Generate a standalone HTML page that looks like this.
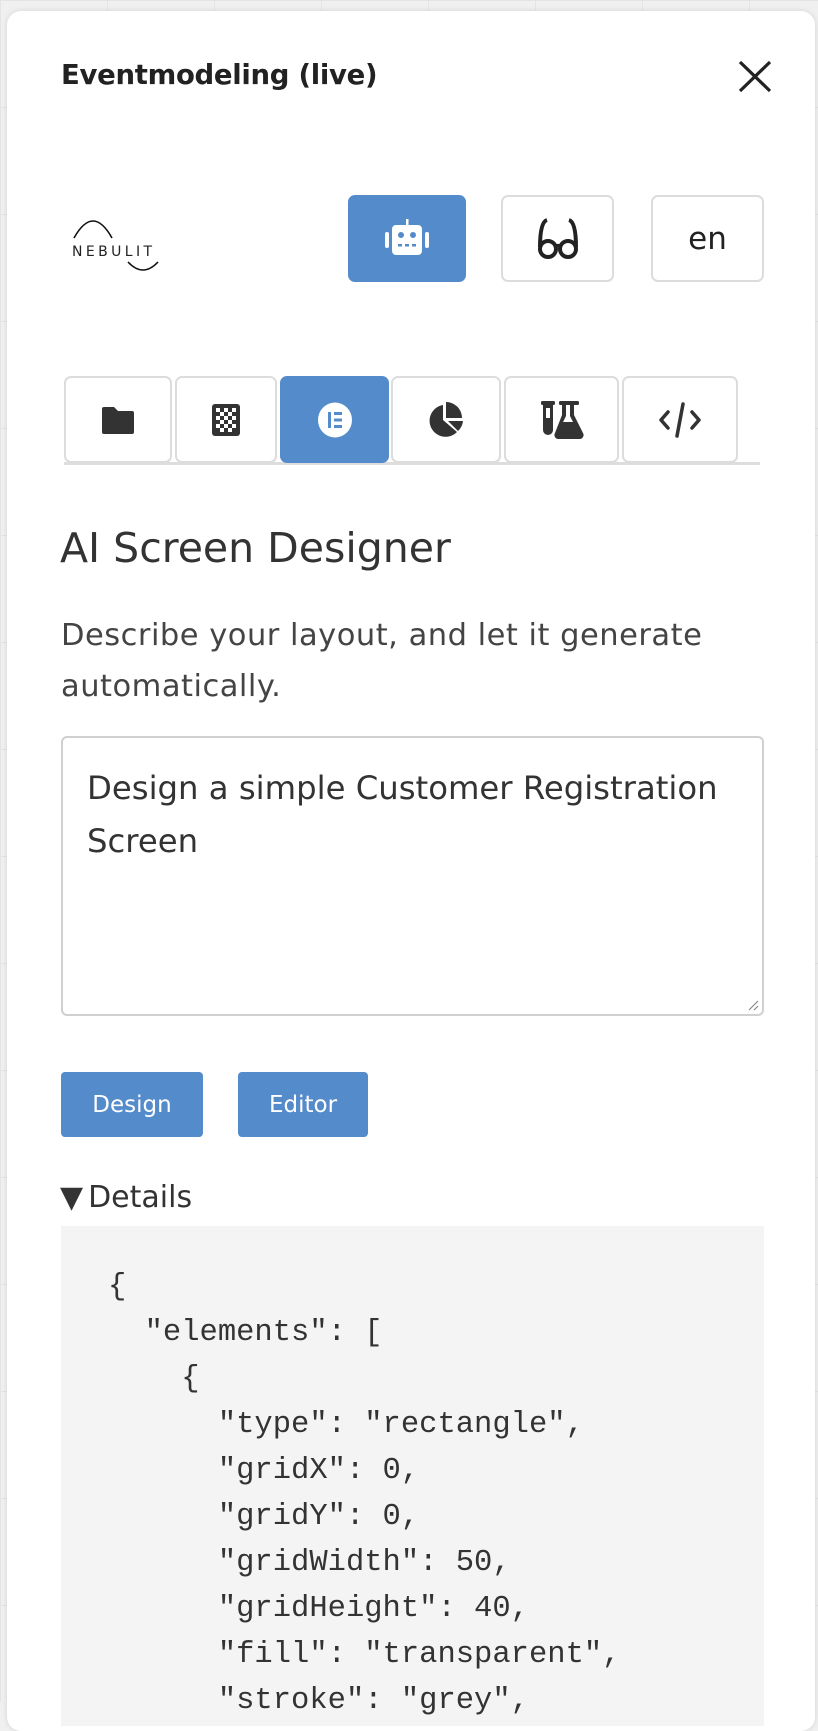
<!DOCTYPE html>
<html><head><meta charset="utf-8"><style>
*{box-sizing:border-box;margin:0;padding:0}
html,body{width:818px;height:1702px;overflow:hidden;background:#f0f0f0;font-family:"DejaVu Sans",sans-serif;color:#333}
.grid{position:absolute;inset:0;background-image:linear-gradient(#e4e4e4 1px,transparent 1px),linear-gradient(90deg,#e4e4e4 1px,transparent 1px);background-size:107px 107px}
.panel{position:absolute;left:7px;top:11px;width:808px;height:1720px;background:#fff;border-radius:14px;box-shadow:0 0 6px rgba(0,0,0,.12)}
.a{position:absolute;white-space:nowrap}
.btn{position:absolute;border:2px solid #dcdcdc;border-radius:7px;background:#fff;display:flex;align-items:center;justify-content:center}
.blue{background:#548bcb;border-color:#548bcb}
pre{font-family:"Liberation Mono",monospace;font-size:30.5px;line-height:46px;color:#333;white-space:pre !important}
</style></head><body>
<div class="grid"></div>
<div class="panel"></div>
<div class="a" style="left:61px;top:59px;font-size:27.5px;font-weight:bold;color:#222;letter-spacing:-0.3px">Eventmodeling (live)</div>
<svg class="a" style="left:738px;top:60px" width="34" height="33" viewBox="0 0 34 33"><path d="M2 2L32 31M32 2L2 31" stroke="#222" stroke-width="3.2"/></svg>
<svg class="a" style="left:70px;top:218px" width="94" height="60" viewBox="0 0 94 60">
<path d="M4 20 Q23 -14 42 20" fill="none" stroke="#111" stroke-width="1.6"/>
<text x="2" y="38" font-family="DejaVu Sans" font-size="14" letter-spacing="3.4" fill="#222">NEBULIT</text>
<path d="M58 44 Q73 60 88 44" fill="none" stroke="#111" stroke-width="1.6"/>
</svg>
<div class="btn blue" style="left:348px;top:195px;width:118px;height:87px">
<svg width="46" height="40" viewBox="0 0 46 40"><rect x="22" y="0" width="2.5" height="7" fill="#fff"/><rect x="8" y="6" width="30" height="30" rx="4" fill="#fff"/><rect x="1" y="13" width="4" height="16" rx="2" fill="#fff"/><rect x="41" y="13" width="4" height="16" rx="2" fill="#fff"/><circle cx="17" cy="16" r="3" fill="#548bcb"/><circle cx="29" cy="16" r="3" fill="#548bcb"/><rect x="14" y="25" width="4" height="2.5" fill="#548bcb"/><rect x="21" y="25" width="4" height="2.5" fill="#548bcb"/><rect x="28" y="25" width="4" height="2.5" fill="#548bcb"/></svg></div>
<div class="btn" style="left:501px;top:195px;width:113px;height:87px">
<svg width="42" height="44" viewBox="0 0 42 44"><path d="M10 3 Q3 5 3 30 M32 3 Q39 5 39 30" fill="none" stroke="#222" stroke-width="4"/><ellipse cx="11" cy="32" rx="8" ry="8" fill="none" stroke="#222" stroke-width="4"/><ellipse cx="31" cy="32" rx="8" ry="8" fill="none" stroke="#222" stroke-width="4"/><path d="M18 30 Q21 27 24 30" fill="none" stroke="#222" stroke-width="3"/></svg></div>
<div class="btn" style="left:651px;top:195px;width:113px;height:87px;font-size:31px;color:#222">en</div>
<div class="a" style="left:64px;top:462px;width:696px;height:3px;background:#ddd"></div>
<div class="btn" style="left:64px;top:376px;width:108px;height:87px"><svg width="34" height="30" viewBox="0 0 34 30"><path d="M3 2h10l4 4h14a2 2 0 0 1 2 2v19a2 2 0 0 1-2 2H3a2 2 0 0 1-2-2V4a2 2 0 0 1 2-2z" fill="#333"/></svg></div>
<div class="btn" style="left:175px;top:376px;width:102px;height:87px"><svg width="28" height="32" viewBox="0 0 28 32"><rect width="28" height="32" rx="3" fill="#333"/><g fill="#fff"><rect x="4" y="4" width="4" height="4"/><rect x="12" y="4" width="4" height="4"/><rect x="20" y="4" width="4" height="4"/><rect x="8" y="8" width="4" height="4"/><rect x="16" y="8" width="4" height="4"/><rect x="4" y="12" width="4" height="4"/><rect x="12" y="12" width="4" height="4"/><rect x="20" y="12" width="4" height="4"/><rect x="8" y="16" width="4" height="4"/><rect x="16" y="16" width="4" height="4"/><rect x="4" y="20" width="4" height="4"/><rect x="12" y="20" width="4" height="4"/><rect x="20" y="20" width="4" height="4"/><rect x="8" y="24" width="4" height="4"/><rect x="16" y="24" width="4" height="4"/></g></svg></div>
<div class="btn blue" style="left:280px;top:376px;width:109px;height:87px"><svg width="36" height="36" viewBox="0 0 36 36"><ellipse cx="18" cy="18" rx="17" ry="17.5" fill="#fff"/><rect x="11" y="10" width="3" height="16" fill="#548bcb"/><rect x="17" y="10" width="8" height="3" fill="#548bcb"/><rect x="17" y="16.5" width="8" height="3" fill="#548bcb"/><rect x="17" y="23" width="8" height="3" fill="#548bcb"/></svg></div>
<div class="btn" style="left:391px;top:376px;width:110px;height:87px"><svg width="38" height="38" viewBox="0 0 38 38"><path d="M16 4A16 16 0 1 0 30 31L16 19Z" fill="#333"/><path d="M19 1A16 16 0 0 1 35 17H19Z" fill="#333"/><path d="M21 20H36A16 16 0 0 1 31 30Z" fill="#333"/></svg></div>
<div class="btn" style="left:504px;top:376px;width:115px;height:87px"><svg width="44" height="40" viewBox="0 0 44 40"><rect x="1" y="1" width="14" height="4" rx="1.5" fill="#333"/><path d="M3 5h10v25a5 5 0 0 1-10 0z" fill="#333"/><rect x="6" y="8" width="4" height="10" fill="#fff"/><rect x="19" y="1" width="20" height="4" rx="1.5" fill="#333"/><path d="M22 5h4v2h4v-2h4v10l9 18a4 4 0 0 1-4 6H19a4 4 0 0 1-4-6l7-18z" fill="#333"/><path d="M26 6h4v10l3 6h-10l3-6z" fill="#fff"/></svg></div>
<div class="btn" style="left:622px;top:376px;width:116px;height:87px"><svg width="44" height="36" viewBox="0 0 44 36"><path d="M10 10L3 18L10 26M34 10L41 18L34 26M25 2L19 34" fill="none" stroke="#333" stroke-width="3.5" stroke-linecap="round" stroke-linejoin="round"/></svg></div>
<div class="a" style="left:60px;top:524px;font-size:41px;color:#333">AI Screen Designer</div>
<div class="a" style="left:61px;top:610px;font-size:30.5px;line-height:51px;color:#444;letter-spacing:0.5px">Describe your layout, and let it generate<br>automatically.</div>
<div class="a" style="left:61px;top:736px;width:703px;height:280px;border:2px solid #d0d0d0;border-radius:6px"></div>
<div class="a" style="left:87px;top:762px;font-size:32.3px;line-height:53px;color:#333">Design a simple Customer Registration<br>Screen</div>
<svg class="a" style="left:746px;top:998px" width="14" height="14"><path d="M12 3L3 12M12 8L8 12" stroke="#888" stroke-width="1.2"/></svg>
<div class="btn blue" style="left:61px;top:1072px;width:142px;height:65px;border-radius:4px;color:#fff;font-size:23px">Design</div>
<div class="btn blue" style="left:238px;top:1072px;width:130px;height:65px;border-radius:4px;color:#fff;font-size:23px">Editor</div>
<div class="a" style="left:60px;top:1180px;font-size:30px;color:#333">▼<span style="margin-left:5px">Details</span></div>
<div class="a" style="left:61px;top:1226px;width:703px;height:500px;background:#f4f4f4"></div>
<pre class="a" style="left:108px;top:1264px">{
  "elements": [
    {
      "type": "rectangle",
      "gridX": 0,
      "gridY": 0,
      "gridWidth": 50,
      "gridHeight": 40,
      "fill": "transparent",
      "stroke": "grey",</pre>
</body></html>
